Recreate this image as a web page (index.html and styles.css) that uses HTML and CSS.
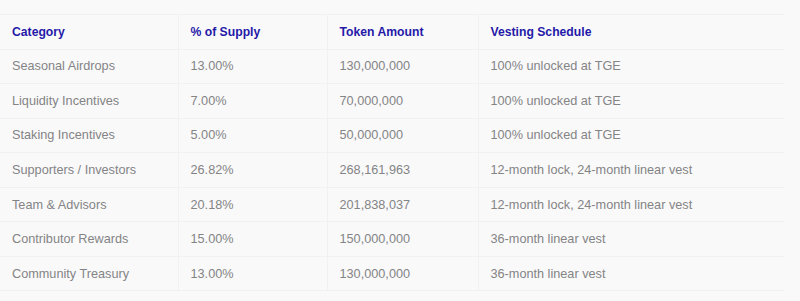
FILE: index.html
```html
<!DOCTYPE html>
<html>
<head>
<meta charset="utf-8">
<link rel="stylesheet" href="styles.css">
</head>
<body>
<div class="wrap">
<table class="alloc">
  <thead>
    <tr>
      <th class="c1">Category</th>
      <th class="c2">% of Supply</th>
      <th class="c3">Token Amount</th>
      <th class="c4">Vesting Schedule</th>
    </tr>
  </thead>
  <tbody>
    <tr><td>Seasonal Airdrops</td><td>13.00%</td><td>130,000,000</td><td>100% unlocked at TGE</td></tr>
    <tr><td>Liquidity Incentives</td><td>7.00%</td><td>70,000,000</td><td>100% unlocked at TGE</td></tr>
    <tr><td>Staking Incentives</td><td>5.00%</td><td>50,000,000</td><td>100% unlocked at TGE</td></tr>
    <tr><td>Supporters / Investors</td><td>26.82%</td><td>268,161,963</td><td>12-month lock, 24-month linear vest</td></tr>
    <tr><td>Team &amp; Advisors</td><td>20.18%</td><td>201,838,037</td><td>12-month lock, 24-month linear vest</td></tr>
    <tr><td>Contributor Rewards</td><td>15.00%</td><td>150,000,000</td><td>36-month linear vest</td></tr>
    <tr><td>Community Treasury</td><td>13.00%</td><td>130,000,000</td><td>36-month linear vest</td></tr>
  </tbody>
</table>
</div>
</body>
</html>
```
FILE: styles.css
```css
html, body {
  margin: 0;
  padding: 0;
  background: #f9f9fa;
}
.wrap {
  padding-top: 14px;
}
.alloc {
  width: 785px;
  border-collapse: collapse;
  table-layout: fixed;
  font-family: "Liberation Sans", Arial, sans-serif;
  font-size: 12.7px;
}
.alloc th, .alloc td {
  box-sizing: border-box;
  text-align: left;
  padding: 0 0 0 12px;
  height: 34.55px;
  border-top: 1px solid #f1f1f3;
  border-bottom: 1px solid #f1f1f3;
  border-left: 1px solid #f1f1f3;
}
.alloc th:first-child, .alloc td:first-child {
  border-left: none;
}
.alloc th {
  color: #2519a8;
  font-weight: 700;
  font-size: 12.2px;
}
.alloc td {
  color: #848485;
}
.c1 { width: 178px; }
.c2 { width: 149px; }
.c3 { width: 151px; }
.c4 { width: auto; }
```
